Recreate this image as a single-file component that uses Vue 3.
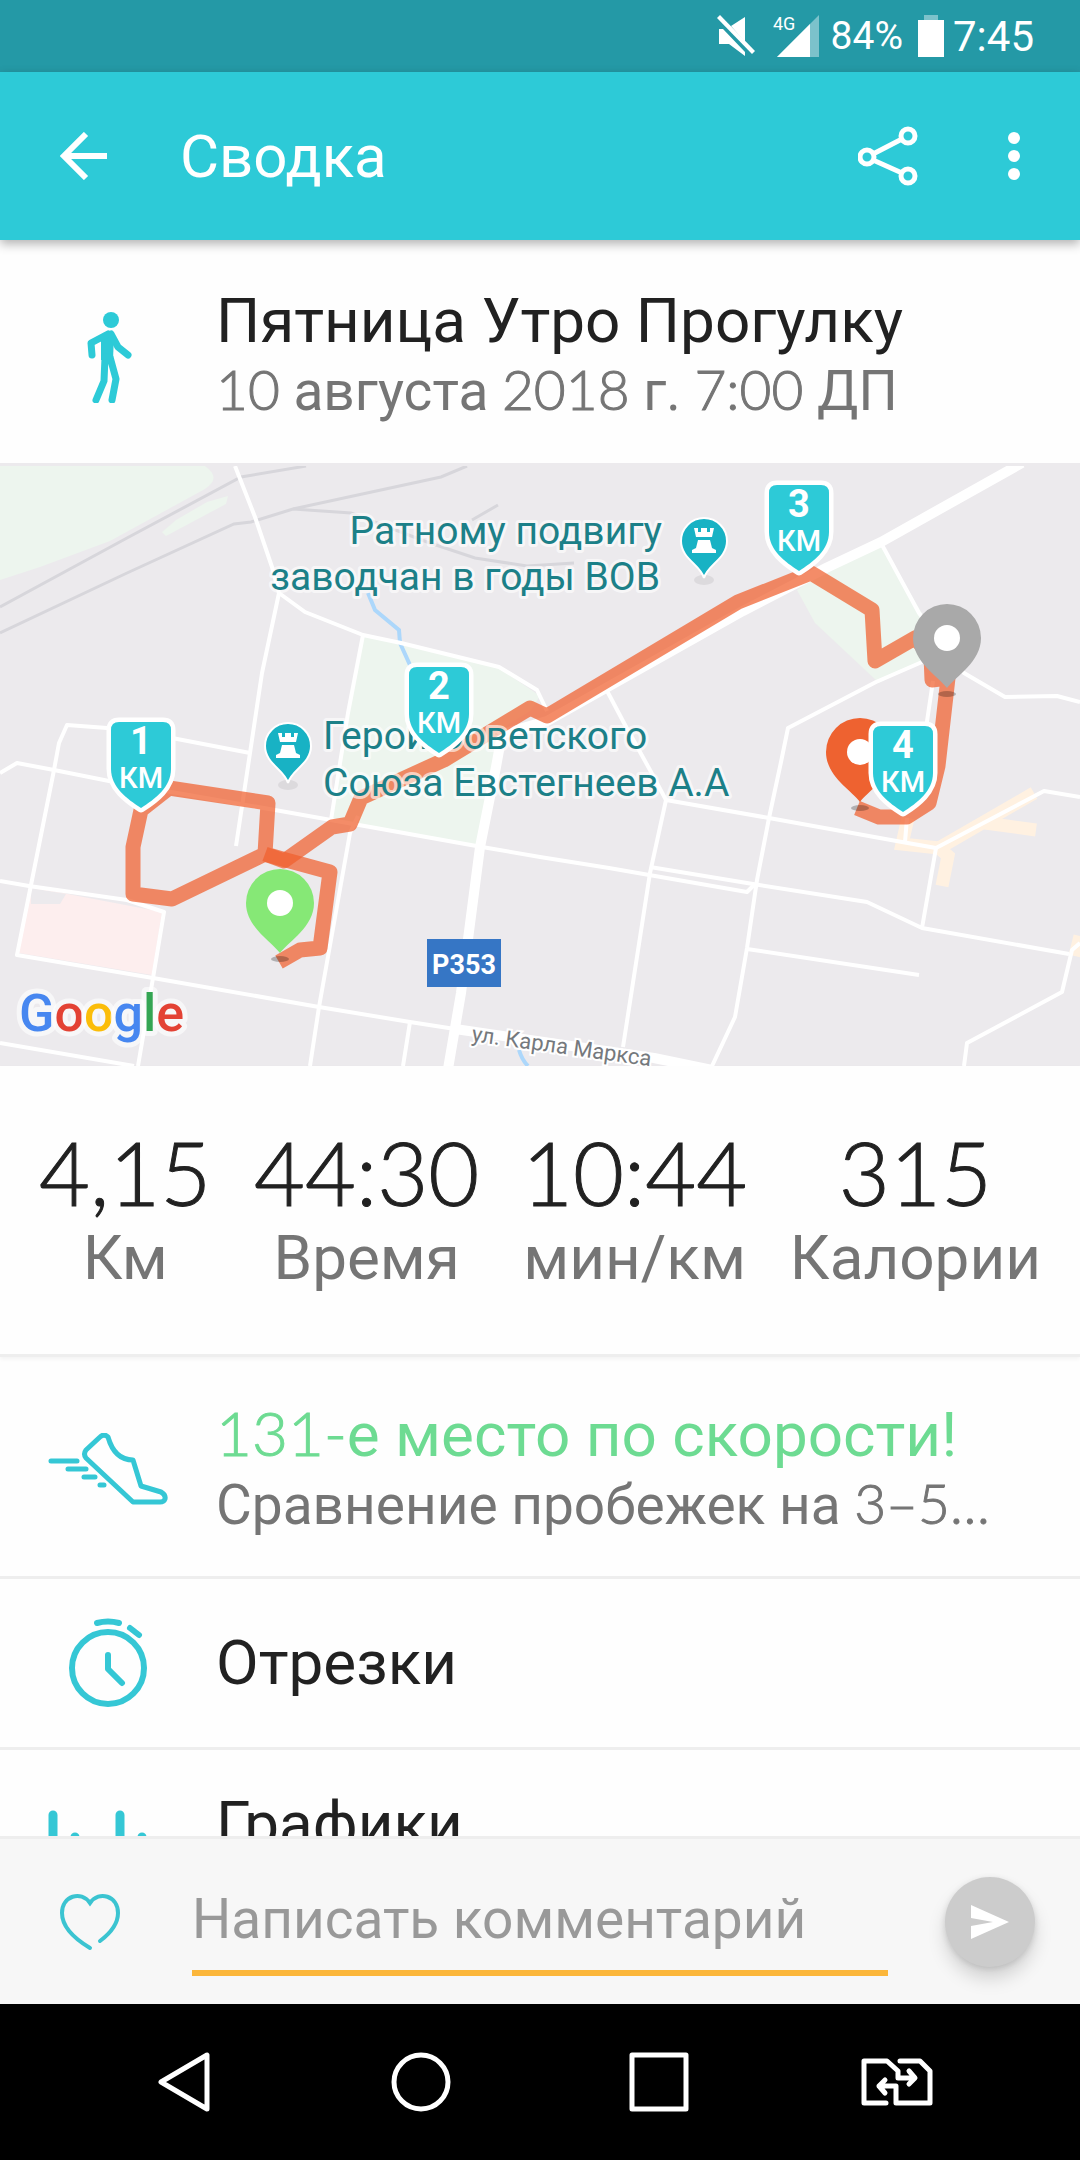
<template>
  <div class="screen">
    <div class="status-bar">
      <svg class="mute-icon" viewBox="0 0 40 42" width="40" height="42" fill="#fff">
        <path d="M14 11 L28 2 V27 Z" />
        <path d="M2 14 L6 14 L28 37 V41 L12 29 H2 Z" />
        <path d="M0 3 L3 0 L38 36 L35 39 Z" />
      </svg>
      <svg class="signal-icon" viewBox="0 0 46 44" width="46" height="44">
        <path d="M4 43 L46 1 V43 Z" fill="#7cc2cb" />
        <path d="M4 43 L37 10 V43 Z" fill="#fff" />
        <text x="0" y="16" class="network">4G</text>
      </svg>
      <span class="battery-level">84%</span>
      <svg class="battery-icon" viewBox="0 0 26 42" width="26" height="42">
        <rect x="6" y="0" width="14" height="6" fill="#7cc2cb" />
        <rect x="0" y="5" width="26" height="37" fill="#fff" />
      </svg>
      <span class="clock">7:45</span>
    </div>

    <header class="app-bar">
      <button class="icon-btn back-btn" aria-label="Назад">
        <svg viewBox="0 0 48 48" width="48" height="48" fill="none" stroke="#fff" stroke-width="6">
          <path d="M47 24 H5 M26 2 L4 24 L26 46" />
        </svg>
      </button>
      <h1>Сводка</h1>
      <button class="icon-btn" aria-label="Поделиться">
        <svg viewBox="0 0 60 60" width="60" height="60" fill="none" stroke="#fff" stroke-width="5">
          <circle cx="9" cy="31" r="7" />
          <circle cx="50" cy="10" r="7" />
          <circle cx="50" cy="50" r="7" />
          <path d="M15 28 L44 13 M15 34 L44 47" />
        </svg>
      </button>
      <button class="icon-btn" aria-label="Ещё">
        <svg viewBox="0 0 12 48" width="12" height="48" fill="#fff">
          <circle cx="6" cy="6" r="6" />
          <circle cx="6" cy="24" r="6" />
          <circle cx="6" cy="42" r="6" />
        </svg>
      </button>
    </header>

    <main class="content">
      <section class="row summary">
        <svg viewBox="0 0 60 96" width="60" height="96" fill="#2dcad7">
          <circle cx="33" cy="13" r="8" />
          <path d="M28 25 Q32 22 36 27 L35 53 H23 V32 Z" />
          <path d="M30 27 L13 36 L14 48 M33 27 L40 40 L50 48 M27 50 L26 74 L18 93 M32 50 L38 72 L34 93"
            fill="none" stroke="#2dcad7" stroke-width="7" stroke-linecap="round" stroke-linejoin="round" />
        </svg>
        <div class="row-text">
          <h2>Пятница Утро Прогулку</h2>
          <p><span class="num">10</span> августа <span class="num">2018</span> г. <span class="num">7:00</span> ДП</p>
        </div>
      </section>

      <section class="map">
        <svg viewBox="0 0 1080 600" preserveAspectRatio="xMidYMid slice">
          <!-- land -->
          <g fill="#edf5ee">
            <path d="M0 0 H205 Q222 12 205 23 L110 75 L40 101 L0 114 Z" />
            <path d="M162 66 L176 54 L207 36 L228 30 L226 38 L166 70 Z" />
            <path d="M363 170 L499 202 L540 230 L530 245 L502 262 L481 381 L331 354 L348 247 Z" />
            <path d="M881 77 L826 104 L797 124 L815 157 L879 217 L922 195 L926 154 Z" />
          </g>
          <path d="M31 421 L162 446 L152 509 L19 487 Z" fill="#fdeeee" />
          <path d="M31 422 L66 428 L60 438 L31 438 Z" fill="#eceaed" />
          <g class="rail">
            <path d="M0 141 L127 72 L241 11 L306 0" />
            <path d="M0 167 L127 107 L234 58 L251 56 L293 43 L441 11 L467 0" />
            <path d="M293 43 L351 47 L427 76 L475 92 L527 100 L574 97 M472 54 L498 39" />
          </g>
          <g class="stream">
            <path d="M368 127 L375 144 L399 164 L400 177 L410 199 L425 225" />
            <path d="M519 584 Q522 594 528 600" />
          </g>
          <g class="plaza">
            <path d="M908 352 L902 378 L939 382 L1034 327" />
            <path d="M939 382 L948 390 L942 420 M985 357 L1036 364 M1075 490 L1080 470" />
          </g>
          <g class="street">
            <path d="M235 0 L255 51 L272 101 L279 127 L305 146 L363 169 L401 177 L499 201 L537 224 L547 245" />
            <path d="M279 127 L262 207 L250 287 L244 327 L236 380" />
            <path d="M363 169 L348 247 L331 354" />
            <path d="M54 304 L59 277 L67 259 L107 262 L172 272 L250 287" />
            <path d="M0 307 L17 297 L54 304 L114 316 L275 344 L331 354 L482 381 L540 391 L609 402 L747 426 L755 418" />
            <path d="M54 304 L31 419 L17 489 L153 512 L319 541 L410 556 L455 563" />
            <path d="M0 415 L29 420 L127 434 L164 446 L153 512 L138 600 M0 577 L134 600" />
            <path d="M358 350 L350 367 L319 541 L310 600 M410 556 L403 600" />
            <path d="M605 221 L624 257 L650 304 L666 334 L650 407 L623 581" />
            <path d="M666 334 L769 352 L902 376 L936 382 L1044 325 L1080 331" />
            <path d="M922 196 L876 216 L788 262 L781 296 L769 352 L757 414 L747 482 L735 551 L712 600" />
            <path d="M650 401 L753 418 L867 436 L922 462 L1069 488 M922 462 L936 382 M907 352 L905 376" />
            <path d="M747 483 L919 509 M1080 477 L1072 484 L1062 526 L967 577 L964 600" />
            <path d="M881 77 L919 147 L964 207 L1005 231 L1057 230 L1080 236 M933 215 L926 262" />
          </g>
          <path class="street street-mid" d="M455 563 L654 592 L712 604" />
          <path class="highway" d="M1022 -3 L881 76 L826 102 L743 145 L547 255 L502 268 L496 301 L480 381 L461 527 L448 603" />

          <!-- route -->
          <g class="route">
            <path d="M279 496 L300 484 L320 482 L330 406 L286 394 L265 388 L268 337 L169 322 L141 344 L133 381 L133 428 L172 433 L265 388" />
            <path d="M265 388 L284 395 L332 361 L350 358 L361 332 L444 294 L530 242 L547 250 L738 136 L811 107 L872 144 L875 195 L915 172 L931 190 L932 214 L948 212 L938 300 L929 337 L907 351 L879 351 L857 342" />
          </g>

          <!-- places -->
          <g class="place">
            <text x="662" y="78" text-anchor="end">Ратному подвигу</text>
            <text x="660" y="124" text-anchor="end">заводчан в годы ВОВ</text>
            <text x="323" y="283">Герой Советского</text>
            <text x="323" y="330">Союза Евстегнеев А.А</text>
          </g>
          <g v-for="p in places" :key="p.x" :transform="`translate(${p.x} ${p.y})`">
            <ellipse cx="0" cy="39" rx="10" ry="5" fill="#dcdadd" />
            <path d="M0 37 C-3 24 -23 18 -23 0 A23 23 0 0 1 23 0 C23 18 3 24 0 37 Z" fill="#18b2c4" stroke="#fff" stroke-width="2" />
            <path d="M-10 -13 H-6 V-9 H-3 V-13 H3 V-9 H6 V-13 H10 L8 -4 H-8 Z M-6 -1 H6 L8 7 L12 9 V12 H-12 V9 L-8 7 Z" fill="#fff" />
          </g>
          <rect x="427" y="473" width="74" height="48" fill="#3676c5" />
          <text x="464" y="508" text-anchor="middle" class="road-no">Р353</text>
          <text transform="translate(471 575) rotate(8)" class="street-name">ул. Карла Маркса</text>

          <!-- pins -->
          <g v-for="pin in pins" :key="pin.x" :transform="`translate(${pin.x} ${pin.y})`">
            <ellipse cx="0" cy="56" rx="9" ry="3" fill="#000" opacity="0.25" />
            <path d="M0 50 C-9 38 -34 24 -34 0 A34 34 0 0 1 34 0 C34 24 9 38 0 50 Z" :fill="pin.color" />
            <circle r="13" fill="#fff" />
          </g>
          <g v-for="m in kmMarks" :key="m.km" :transform="`translate(${m.x} ${m.y})`">
            <path class="shield" d="M-22 5 H22 Q30 5 30 13 V52 C30 70 14 82 0 91 C-14 82 -30 70 -30 52 V13 Q-30 5 -22 5 Z" />
            <text y="37" class="km-num">{{ m.km }}</text>
            <text y="71" class="km-unit">КМ</text>
          </g>

          <text x="19" y="565" class="google"><tspan fill="#4787f0">G</tspan><tspan fill="#e34234">o</tspan><tspan fill="#fbbd09">o</tspan><tspan fill="#4787f0">g</tspan><tspan fill="#34a553">l</tspan><tspan fill="#e34234">e</tspan></text>
        </svg>
      </section>

      <section class="stats">
        <div v-for="s in stats" :key="s.label" class="stat">
          <span class="stat-value">{{ s.value }}</span>
          <span class="stat-label">{{ s.label }}</span>
        </div>
      </section>

      <section class="row rank">
        <svg viewBox="0 0 120 72" width="120" height="72" class="line-icon">
          <path d="M52 4 Q56 0 60 4 C64 18 72 27 85 27 L93 53 L113 59 Q118 62 117 66 Q116 69 112 69 H85 L38 25 Q35 21 38 17 Z" />
          <path d="M3 28 H29 M20 36 H38 M36 44 H47 M52 52 H56" />
        </svg>
        <div class="row-text">
          <h2 class="good"><span class="num">131-</span>е место по скорости!</h2>
          <p>Сравнение пробежек на <span class="num">3–5…</span></p>
        </div>
      </section>

      <section class="row single">
        <svg viewBox="0 0 80 92" width="80" height="92" class="line-icon bold">
          <circle cx="40" cy="51" r="36" />
          <path d="M40 38 V52 L54 66 M29 6 Q40 3 51 6 M62 11 L71 18" />
        </svg>
        <h2>Отрезки</h2>
      </section>

      <section class="row charts">
        <svg viewBox="0 0 120 148" width="120" height="148" class="line-icon bars">
          <path d="M5 65 V110 M27 87 V110 M72 65 V110 M94 87 V110" />
        </svg>
        <h2>Графики</h2>
      </section>
    </main>

    <form class="comment-bar" @submit.prevent="sendComment">
      <button type="button" class="icon-btn like-btn" aria-label="Нравится">
        <svg viewBox="0 0 60 58" width="60" height="58" fill="none" stroke="#3bc4d1" stroke-width="4" stroke-linecap="round">
          <path d="M40 48 C52 39 58 29 58 20 C58 3 39 -3 30 10 C21 -3 2 3 2 20 C2 34 15 46 30 55" />
        </svg>
      </button>
      <input v-model="comment" type="text" placeholder="Написать комментарий" aria-label="Написать комментарий" />
      <button type="submit" class="send-btn" aria-label="Отправить">
        <svg viewBox="0 0 38 34" width="38" height="34" fill="#fff">
          <path d="M0 0 L38 17 L0 34 V21 L22 17 L0 13 Z" />
        </svg>
      </button>
    </form>

    <nav class="nav-bar">
      <button class="icon-btn" aria-label="Назад">
        <svg viewBox="0 0 60 60" width="60" height="60" class="nav-icon">
          <path d="M54 3 V57 L8 30 Z" />
        </svg>
      </button>
      <button class="icon-btn" aria-label="Домой">
        <svg viewBox="0 0 60 60" width="60" height="60" class="nav-icon">
          <circle cx="30" cy="30" r="27" />
        </svg>
      </button>
      <button class="icon-btn" aria-label="Недавние">
        <svg viewBox="0 0 60 60" width="60" height="60" class="nav-icon">
          <rect x="3" y="3" width="54" height="54" />
        </svg>
      </button>
      <button class="icon-btn" aria-label="Сменить SIM">
        <svg viewBox="0 0 72 48" width="72" height="48" class="nav-icon">
          <path d="M25 45 H3 V3 H26 L37 13 V20 H53 M48 13 L54 20 L48 26" />
          <path d="M39 3 H59 L69 13 V45 H35 V28 H18 M24 22 L18 28 L24 35" />
        </svg>
      </button>
    </nav>
  </div>
</template>

<script setup>
import { ref } from 'vue'

const comment = ref('')

const stats = [
  { value: '4,15', label: 'Км' },
  { value: '44:30', label: 'Время' },
  { value: '10:44', label: 'мин/км' },
  { value: '315', label: 'Калории' }
]

// Map overlays, in map units (1080 x 600)
const kmMarks = [
  { km: 1, x: 141, y: 251 },
  { km: 2, x: 439, y: 196 },
  { km: 3, x: 799, y: 14 },
  { km: 4, x: 903, y: 255 }
]

const pins = [
  { x: 280, y: 437, color: '#86e876' },
  { x: 947, y: 172, color: '#a9a9a9' },
  { x: 860, y: 286, color: '#ee6230' }
]

const places = [
  { x: 288, y: 280 },
  { x: 704, y: 75 }
]

const sendComment = () => {
  comment.value = ''
}
</script>

<style>
body {
  margin: 0;
  background: #fff;
}
</style>

<style scoped>
.screen {
  height: 100vh;
  display: flex;
  flex-direction: column;
  overflow: hidden;
  background: #fefefe;
  color: #212121;
  font-family: Roboto, 'Liberation Sans', sans-serif;
}

h1,
h2,
p {
  margin: 0;
  font-weight: 400;
}

.icon-btn {
  display: flex;
  align-items: center;
  justify-content: center;
  padding: 0;
  border: none;
  background: none;
  cursor: pointer;
}

/* Status bar */
.status-bar {
  flex: none;
  height: 72px;
  box-sizing: border-box;
  padding-right: 46px;
  display: flex;
  align-items: center;
  justify-content: flex-end;
  background: #2499a6;
  color: #fff;
}

.signal-icon {
  margin: 0 12px 0 16px;
}

.network {
  font-size: 18px;
  fill: #fff;
}

.battery-level {
  font-size: 39px;
}

.battery-icon {
  margin: 0 9px 0 15px;
}

.clock {
  font-size: 42px;
}

/* App bar */
.app-bar {
  position: relative;
  z-index: 1;
  flex: none;
  height: 168px;
  box-sizing: border-box;
  padding: 0 60px;
  display: flex;
  align-items: center;
  background: #2dcad7;
  color: #fff;
  box-shadow: 0 4px 10px rgba(0, 0, 0, 0.3);
}

.app-bar h1 {
  flex: 1;
  margin-left: 72px;
  font-size: 60px;
}

.app-bar .icon-btn + .icon-btn {
  margin-left: 90px;
}

/* Rows */
.content {
  flex: 1;
  min-height: 0;
  overflow: hidden;
}

.row {
  display: grid;
  grid-template-columns: 216px 1fr;
  align-items: center;
  border-bottom: 3px solid #eee;
}

.row > svg {
  justify-self: center;
}

.row h2 {
  font-size: 62px;
  line-height: 72px;
  white-space: nowrap;
}

.row p {
  font-size: 55px;
  line-height: 68px;
  color: #757575;
  white-space: nowrap;
}

.row .good {
  color: #6ddb92;
}

.num {
  font-family: Lato, Roboto, sans-serif;
  font-weight: 300;
  line-height: 1;
  -webkit-text-stroke: 1px currentColor;
}

.summary {
  min-height: 217px;
  padding-top: 6px;
  border-bottom-color: #eceaed;
}

.rank {
  min-height: 215px;
  padding-top: 4px;
}

.single {
  min-height: 168px;
}

.charts {
  min-height: 148px;
}

.line-icon {
  fill: none;
  stroke: #35c7d5;
  stroke-width: 5;
  stroke-linecap: round;
  stroke-linejoin: round;
}

.line-icon.bold {
  stroke-width: 6;
}

.line-icon.bars {
  stroke-width: 9;
}

/* Map */
.map {
  height: 600px;
  background: #eceaed;
}

.map svg {
  display: block;
  width: 100%;
  height: 100%;
}

.rail {
  fill: none;
  stroke: #d7d6db;
  stroke-width: 3;
}

.stream {
  fill: none;
  stroke: #acd7fb;
  stroke-width: 4;
}

.plaza {
  fill: none;
  stroke: #fff1e1;
  stroke-width: 13;
}

.street {
  fill: none;
  stroke: #fff;
  stroke-width: 4;
  stroke-linejoin: round;
}

.street-mid {
  stroke-width: 10;
}

.highway {
  fill: none;
  stroke: #fff;
  stroke-width: 10;
}

.route path {
  fill: none;
  stroke: #f0602e;
  stroke-opacity: 0.72;
  stroke-width: 15;
  stroke-linejoin: round;
}

.place {
  font-size: 39px;
  fill: #1c8088;
  stroke: rgba(255, 255, 255, 0.6);
  stroke-width: 6;
  stroke-linejoin: round;
  paint-order: stroke;
}

.road-no {
  font-size: 27px;
  font-weight: 700;
  fill: #fff;
}

.street-name {
  font-size: 22px;
  fill: #75797d;
  stroke: #fff;
  stroke-width: 4;
  paint-order: stroke;
}

.shield {
  fill: #2dcad7;
  stroke: #fff;
  stroke-width: 9;
  stroke-linejoin: round;
  paint-order: stroke;
}

.km-num {
  font-size: 38px;
  font-weight: 700;
  fill: #fff;
  text-anchor: middle;
}

.km-unit {
  font-size: 29px;
  font-weight: 500;
  fill: #fff;
  text-anchor: middle;
}

.google {
  font-size: 52px;
  font-weight: 500;
  stroke: rgba(255, 255, 255, 0.6);
  stroke-width: 10;
  stroke-linejoin: round;
  paint-order: stroke;
}

/* Stats */
.stats {
  display: flex;
  justify-content: space-between;
  padding: 60px 39px 56px;
  border-bottom: 3px solid #eee;
  box-shadow: 0 2px 4px rgba(0, 0, 0, 0.05);
}

.stat {
  display: flex;
  flex-direction: column;
  align-items: center;
}

.stat-value {
  font-family: Lato, Roboto, sans-serif;
  font-size: 88px;
  font-weight: 300;
  line-height: 92px;
  -webkit-text-stroke: 1px currentColor;
}

.stat-label {
  font-size: 62px;
  line-height: 80px;
  color: #757575;
}

/* Comment bar */
.comment-bar {
  flex: none;
  display: flex;
  align-items: center;
  height: 168px;
  box-sizing: border-box;
  padding: 0 45px 0 60px;
  border-top: 3px solid #eee;
  background: #f7f7f7;
}

.comment-bar input {
  flex: 1;
  min-width: 0;
  height: 108px;
  box-sizing: border-box;
  margin: 0 57px 0 72px;
  padding: 0;
  border: none;
  border-bottom: 6px solid #fbb63a;
  outline: none;
  background: none;
  color: #212121;
  font-family: inherit;
  font-size: 55px;
}

.comment-bar input::placeholder {
  color: #999;
  opacity: 1;
}

.send-btn {
  display: flex;
  align-items: center;
  justify-content: center;
  width: 90px;
  height: 90px;
  padding: 0;
  border: none;
  border-radius: 50%;
  background: #ccc;
  box-shadow: 0 12px 18px rgba(0, 0, 0, 0.15), 0 2px 6px rgba(0, 0, 0, 0.12);
  cursor: pointer;
}

/* System navigation */
.nav-bar {
  flex: none;
  display: flex;
  height: 156px;
  box-sizing: border-box;
  padding: 0 64px;
  background: #000;
}

.nav-bar .icon-btn {
  flex: 1;
}

.nav-icon {
  fill: none;
  stroke: #fff;
  stroke-width: 5;
  stroke-linejoin: round;
  stroke-linecap: round;
}
</style>
